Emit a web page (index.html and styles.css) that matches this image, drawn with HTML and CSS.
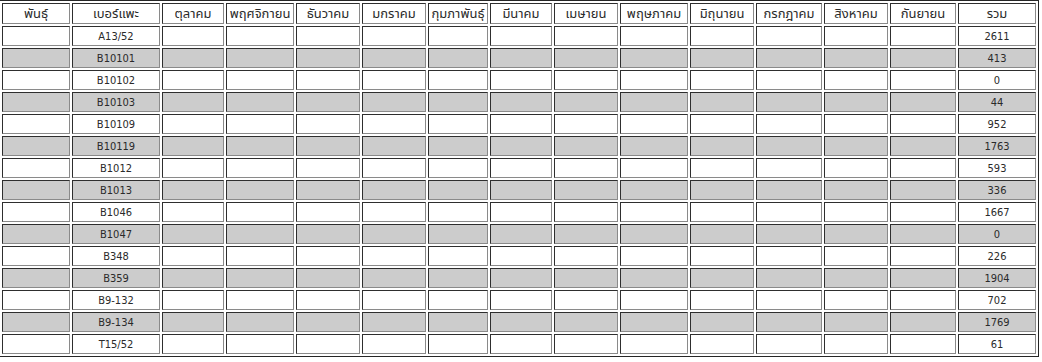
FILE: index.html
```html
<!DOCTYPE html>
<html lang="th">
<head>
<meta charset="utf-8">
<title>รายงาน</title>
<link rel="stylesheet" href="styles.css">
</head>
<body>
<table class="report">
  <thead>
    <tr>
      <th class="c1">พันธุ์</th>
      <th class="c2">เบอร์แพะ</th>
      <th class="c3">ตุลาคม</th>
      <th class="c4">พฤศจิกายน</th>
      <th class="c5">ธันวาคม</th>
      <th class="c6">มกราคม</th>
      <th class="c7">กุมภาพันธุ์</th>
      <th class="c8">มีนาคม</th>
      <th class="c9">เมษายน</th>
      <th class="c10">พฤษภาคม</th>
      <th class="c11">มิถุนายน</th>
      <th class="c12">กรกฎาคม</th>
      <th class="c13">สิงหาคม</th>
      <th class="c14">กันยายน</th>
      <th class="c15">รวม</th>
    </tr>
  </thead>
  <tbody>
    <tr><td></td><td class="ctr">A13/52</td><td></td><td></td><td></td><td></td><td></td><td></td><td></td><td></td><td></td><td></td><td></td><td></td><td class="ctr">2611</td></tr>
    <tr class="alt"><td></td><td class="ctr">B10101</td><td></td><td></td><td></td><td></td><td></td><td></td><td></td><td></td><td></td><td></td><td></td><td></td><td class="ctr">413</td></tr>
    <tr><td></td><td class="ctr">B10102</td><td></td><td></td><td></td><td></td><td></td><td></td><td></td><td></td><td></td><td></td><td></td><td></td><td class="ctr">0</td></tr>
    <tr class="alt"><td></td><td class="ctr">B10103</td><td></td><td></td><td></td><td></td><td></td><td></td><td></td><td></td><td></td><td></td><td></td><td></td><td class="ctr">44</td></tr>
    <tr><td></td><td class="ctr">B10109</td><td></td><td></td><td></td><td></td><td></td><td></td><td></td><td></td><td></td><td></td><td></td><td></td><td class="ctr">952</td></tr>
    <tr class="alt"><td></td><td class="ctr">B10119</td><td></td><td></td><td></td><td></td><td></td><td></td><td></td><td></td><td></td><td></td><td></td><td></td><td class="ctr">1763</td></tr>
    <tr><td></td><td class="ctr">B1012</td><td></td><td></td><td></td><td></td><td></td><td></td><td></td><td></td><td></td><td></td><td></td><td></td><td class="ctr">593</td></tr>
    <tr class="alt"><td></td><td class="ctr">B1013</td><td></td><td></td><td></td><td></td><td></td><td></td><td></td><td></td><td></td><td></td><td></td><td></td><td class="ctr">336</td></tr>
    <tr><td></td><td class="ctr">B1046</td><td></td><td></td><td></td><td></td><td></td><td></td><td></td><td></td><td></td><td></td><td></td><td></td><td class="ctr">1667</td></tr>
    <tr class="alt"><td></td><td class="ctr">B1047</td><td></td><td></td><td></td><td></td><td></td><td></td><td></td><td></td><td></td><td></td><td></td><td></td><td class="ctr">0</td></tr>
    <tr><td></td><td class="ctr">B348</td><td></td><td></td><td></td><td></td><td></td><td></td><td></td><td></td><td></td><td></td><td></td><td></td><td class="ctr">226</td></tr>
    <tr class="alt"><td></td><td class="ctr">B359</td><td></td><td></td><td></td><td></td><td></td><td></td><td></td><td></td><td></td><td></td><td></td><td></td><td class="ctr">1904</td></tr>
    <tr><td></td><td class="ctr">B9-132</td><td></td><td></td><td></td><td></td><td></td><td></td><td></td><td></td><td></td><td></td><td></td><td></td><td class="ctr">702</td></tr>
    <tr class="alt"><td></td><td class="ctr">B9-134</td><td></td><td></td><td></td><td></td><td></td><td></td><td></td><td></td><td></td><td></td><td></td><td></td><td class="ctr">1769</td></tr>
    <tr><td></td><td class="ctr">T15/52</td><td></td><td></td><td></td><td></td><td></td><td></td><td></td><td></td><td></td><td></td><td></td><td></td><td class="ctr">61</td></tr>
  </tbody>
</table>
</body>
</html>
```
FILE: styles.css
```css
html, body {
  margin: 0;
  padding: 0;
  background: #ffffff;
}

.report {
  margin-left: -1px;
  width: 1040px;
  table-layout: fixed;
  border-collapse: separate;
  border-spacing: 2px;
  border: 1px solid #262626;
  font-family: "DejaVu Sans Condensed", "DejaVu Sans", "Noto Sans Thai", "Noto Sans", sans-serif;
  font-stretch: condensed;
  font-size: 11px;
  color: #2a2a2a;
}

.report th,
.report td {
  box-sizing: border-box;
  height: 20px;
  padding: 2px 1px 0;
  line-height: 16px;
  border-style: solid;
  border-width: 1px;
  border-color: #2e2e2e #8a8a8a #8a8a8a #2e2e2e;
  font-weight: normal;
  text-align: center;
  white-space: nowrap;
  overflow: hidden;
  background: #ffffff;
}

.report th {
  height: 21px;
  padding: 0 1px;
  line-height: 19px;
  font-size: 13px;
}

.report tr.alt td {
  background: #cccccc;
}

.report .ctr {
  text-align: center;
}

.c1 { width: 68px; }
.c2 { width: 88px; }
.c3 { width: 62px; }
.c4 { width: 68px; }
.c5 { width: 64px; }
.c6 { width: 64px; }
.c7 { width: 60px; }
.c8 { width: 62px; }
.c9 { width: 64px; }
.c10 { width: 68px; }
.c11 { width: 64px; }
.c12 { width: 66px; }
.c13 { width: 64px; }
.c14 { width: 66px; }
.c15 { width: 78px; }
```
